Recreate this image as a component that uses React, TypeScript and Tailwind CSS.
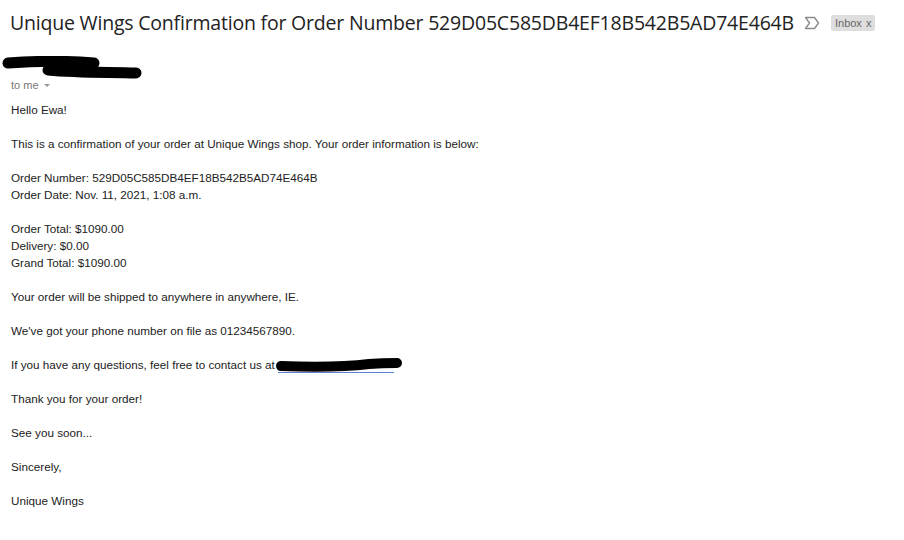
import React from 'react';

const lines: string[][] = [
    ['Hello Ewa!'],
    ['This is a confirmation of your order at Unique Wings shop. Your order information is below:'],
    ['Order Number: 529D05C585DB4EF18B542B5AD74E464B', 'Order Date: Nov. 11, 2021, 1:08 a.m.'],
    ['Order Total: $1090.00', 'Delivery: $0.00', 'Grand Total: $1090.00'],
    ['Your order will be shipped to anywhere in anywhere, IE.'],
    ["We've got your phone number on file as 01234567890."],
];

const closing = ['Thank you for your order!', 'See you soon...', 'Sincerely,', 'Unique Wings'];

export default function App() {
    return (
        <div className="w-[904px] h-[540px] bg-white overflow-hidden" style={{ fontFamily: '"Liberation Sans", Arial, sans-serif' }}>
            {/* Subject */}
            <div className="flex items-center pl-[10px] pt-[8px] h-[38px] whitespace-nowrap">
                <h1 className="text-[19.5px] leading-[28px] tracking-[-0.2px] text-[#222]" style={{ fontFamily: '"Open Sans", Roboto, sans-serif' }}>
                    Unique Wings Confirmation for Order Number 529D05C585DB4EF18B542B5AD74E464B
                </h1>
                <svg className="ml-[10px] w-[16px] h-[14px] shrink-0" viewBox="0 0 16 14">
                    <path d="M1.5 1.5h9l4 5.5-4 5.5h-9l4-5.5z" fill="none" stroke="#8a8a8a" strokeWidth="1.4" strokeLinejoin="round" />
                </svg>
                <span className="ml-[11px] bg-[#dedede] text-[#666] text-[11px] leading-[16px] px-[4px] rounded-[2px]">
                    Inbox <span className="ml-[1px]">x</span>
                </span>
            </div>

            {/* Sender */}
            <div className="relative h-[52px]">
                <svg className="absolute left-0 top-[18px] w-[145px] h-[26px]" viewBox="0 0 145 26">
                    <path d="M8 7 C 35 5, 70 5, 94 7" fill="none" stroke="#000" strokeWidth="11" strokeLinecap="round" />
                    <path d="M48 14 C 80 17, 110 16, 136 17" fill="none" stroke="#000" strokeWidth="11" strokeLinecap="round" />
                </svg>
                <div className="absolute left-[11px] top-[40px] text-[11px] leading-[14px] text-[#777] flex items-center">
                    to me
                    <span className="ml-[5px] w-0 h-0 border-l-[3px] border-r-[3px] border-t-[3px] border-l-transparent border-r-transparent border-t-[#999]" />
                </div>
            </div>

            {/* Body */}
            <div className="pl-[11px] pt-[11px] text-[11.7px] leading-[17px] text-[#222] flex flex-col gap-[17px]">
                {lines.map((group, i) => (
                    <div key={i}>
                        {group.map((l) => (
                            <div key={l}>{l}</div>
                        ))}
                    </div>
                ))}
                <div className="flex items-center">
                    <span>If you have any questions, feel free to contact us at&nbsp;</span>
                    <span className="relative inline-block w-[122px] h-[17px]">
                        <span className="absolute left-0 right-[6px] bottom-[0px] border-b border-[#5a7fd0]" />
                        <svg className="absolute left-[-4px] top-[-1px] w-[130px] h-[18px]" viewBox="0 0 130 18">
                            <path d="M7 11 C 35 12, 70 12, 95 9 C 108 8, 116 8, 123 8" fill="none" stroke="#000" strokeWidth="10" strokeLinecap="round" />
                        </svg>
                    </span>
                </div>
                {closing.map((l) => (
                    <div key={l}>{l}</div>
                ))}
            </div>
        </div>
    );
}
